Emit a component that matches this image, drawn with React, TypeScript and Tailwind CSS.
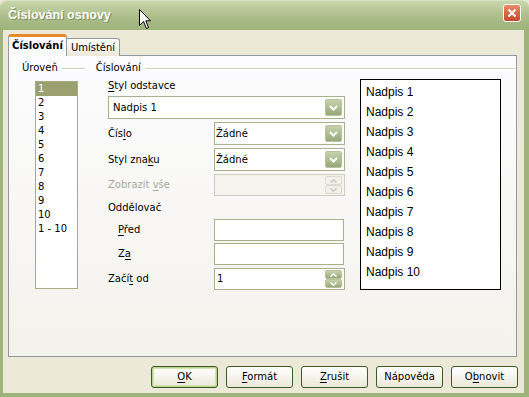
import React from 'react';

const levels = ['1', '2', '3', '4', '5', '6', '7', '8', '9', '10', '1 - 10'];
const headings = Array.from({ length: 10 }, (_, i) => `Nadpis ${i + 1}`);
const buttons = [
  { pre: '', key: 'O', post: 'K', def: true },
  { pre: '', key: 'F', post: 'ormát' },
  { pre: '', key: 'Z', post: 'rušit' },
  { pre: 'Nápověda', key: '', post: '' },
  { pre: 'O', key: 'b', post: 'novit' },
];

function Chevron() {
  return (
    <svg width="9" height="6" viewBox="0 0 9 6">
      <path d="M1 1 L4.5 4.5 L8 1" fill="none" stroke="#fff" strokeWidth="2" />
    </svg>
  );
}

function ComboArrow() {
  return (
    <div className="w-[17px] h-[17px] rounded-[2px] border border-[#b7c39c] bg-gradient-to-b from-[#c7d1ac] to-[#98a878] flex items-center justify-center">
      <Chevron />
    </div>
  );
}

function Combo({ value, wide }: { value: string; wide?: boolean }) {
  return (
    <div
      className={`h-[23px] border border-[#a9b08f] bg-white flex items-center p-[2px] ${
        wide ? 'w-[237px] pl-[4px]' : 'w-[131px] pl-[1px]'
      }`}
    >
      <span className="flex-1">{value}</span>
      <ComboArrow />
    </div>
  );
}

function Spin({ value, disabled }: { value?: string; disabled?: boolean }) {
  const btn = disabled
    ? 'bg-[#f1f0ea] border-[#dddcd3]'
    : 'bg-gradient-to-b from-[#c7d1ac] to-[#98a878] border-[#b7c39c]';
  const stroke = disabled ? '#c9c8bd' : '#fff';
  return (
    <div
      className={`w-[131px] h-[22px] border flex items-center pl-[2px] pr-[2px] ${
        disabled ? 'border-[#cfcdbf] bg-[#f4f3ee]' : 'border-[#a9b08f] bg-white'
      }`}
    >
      <span className="flex-1">{value}</span>
      <div className="flex flex-col gap-0">
        <div className={`w-[17px] h-[9px] border rounded-[2px] flex items-center justify-center ${btn}`}>
          <svg width="7" height="4" viewBox="0 0 7 4">
            <path d="M0.5 3.5 L3.5 0.8 L6.5 3.5" fill="none" stroke={stroke} strokeWidth="1.5" />
          </svg>
        </div>
        <div className={`w-[17px] h-[9px] border rounded-[2px] flex items-center justify-center ${btn}`}>
          <svg width="7" height="4" viewBox="0 0 7 4">
            <path d="M0.5 0.5 L3.5 3.2 L6.5 0.5" fill="none" stroke={stroke} strokeWidth="1.5" />
          </svg>
        </div>
      </div>
    </div>
  );
}

function TextBox() {
  return <div className="w-[130px] h-[22px] border border-[#a9b08f] bg-white" />;
}

function Label({ pre, k, post, indent, disabled }: { pre: string; k: string; post: string; indent?: boolean; disabled?: boolean }) {
  return (
    <span className={`${indent ? 'pl-[10px] w-[106px]' : 'w-[106px]'} ${disabled ? 'text-[#aca899]' : ''}`}>
      {pre}
      <span className="underline underline-offset-[2px]">{k}</span>
      {post}
    </span>
  );
}

export default function App() {
  return (
    <div className="w-[529px] h-[397px] relative flex flex-col bg-[#ece9d8] overflow-hidden font-['DejaVu_Sans',Tahoma,sans-serif] text-[10px] text-black leading-none">
      {/* Title bar */}
      <div className="h-[30px] shrink-0 rounded-t-[7px] border-t border-[#d8e3c4] bg-gradient-to-b from-[#c9d7ac] via-[#aebf8c] to-[#9db279] flex items-center pl-[8px] pr-[8px]">
        <span className="flex-1 text-white font-bold text-[12.5px] font-['Liberation_Sans',Arial,sans-serif] [text-shadow:1px_1px_0_#7d8f5e]">
          Číslování osnovy
        </span>
        <div className="w-[18px] h-[18px] -mt-[5px] rounded-[3px] border border-white bg-gradient-to-b from-[#e88b66] to-[#c4482a] flex items-center justify-center">
          <svg width="10" height="10" viewBox="0 0 10 10">
            <path d="M1.5 1.5 L8.5 8.5 M8.5 1.5 L1.5 8.5" stroke="#fff" strokeWidth="2" />
          </svg>
        </div>
      </div>

      {/* Window body */}
      <div className="flex-1 flex flex-col border-l-[3px] border-r-[5px] border-b-[4px] border-[#9eb47c] pl-[5px] pr-[5px]">
        {/* Tabs */}
        <div className="h-[26px] flex items-end -mb-[1px] relative z-10">
          <div className="w-[59px] h-[22px] bg-[#fcfcfe] border-x border-[#919b9c] border-t-[3px] border-t-[#e68b2c] rounded-t-[3px] flex items-center justify-center font-bold pb-[1px]">
            Číslování
          </div>
          <div className="w-[53px] h-[18px] bg-gradient-to-b from-[#fefefe] to-[#ece9d8] border-t border-r border-[#919b9c] rounded-tr-[3px] flex items-center justify-center">
            Umístění
          </div>
        </div>

        {/* Tab panel */}
        <div className="h-[302px] mr-[2px] border border-[#919b9c] bg-gradient-to-b from-[#fcfcfe] to-[#f3f2ec] flex flex-col">
          <div className="h-[12px] mt-[6px] flex items-center">
            <span className="ml-[13px]">Úroveň</span>
            <div className="ml-[4px] w-[23px] h-px bg-[#d0d0bf]" />
            <span className="ml-[11px]">Číslování</span>
            <div className="ml-[4px] flex-1 mr-[1px] h-px bg-[#d0d0bf]" />
          </div>

          <div className="flex items-start mt-[5px]">
            {/* Level list */}
            <div className="ml-[26px] mt-[2px] w-[43px] h-[208px] border border-[#a4ae86] bg-white">
              {levels.map((l, i) => (
                <div
                  key={l}
                  className={`h-[14px] pl-[2px] flex items-center ${i === 0 ? 'bg-[#9aa06f] text-white' : ''}`}
                >
                  {l}
                </div>
              ))}
            </div>

            {/* Form */}
            <div className="ml-[30px] w-[237px] flex flex-col">
              <div className="h-[14px] flex items-center">
                <Label pre="" k="S" post="tyl odstavce" />
              </div>
              <div className="mt-[3px]">
                <Combo value="Nadpis 1" wide />
              </div>
              <div className="mt-[3px] flex items-center">
                <Label pre="Čís" k="l" post="o" />
                <Combo value="Žádné" />
              </div>
              <div className="mt-[3px] flex items-center">
                <Label pre="Styl zna" k="k" post="u" />
                <Combo value="Žádné" />
              </div>
              <div className="mt-[3px] flex items-center">
                <Label pre="Zobrazit " k="v" post="še" disabled />
                <Spin disabled />
              </div>
              <div className="mt-[5px] h-[14px] flex items-center">
                <span>Oddělovač</span>
              </div>
              <div className="mt-[4px] flex items-center">
                <Label pre="" k="P" post="řed" indent />
                <TextBox />
              </div>
              <div className="mt-[2px] flex items-center">
                <Label pre="Z" k="a" post="" indent />
                <TextBox />
              </div>
              <div className="mt-[3px] flex items-center">
                <Label pre="Začí" k="t" post=" od" />
                <Spin value="1" />
              </div>
            </div>

            {/* Preview */}
            <div className="ml-[15px] w-[141px] h-[211px] border border-black bg-white pt-[2px] pl-[5px] font-['Liberation_Sans',Arial,sans-serif] text-[12px]">
              {headings.map((h) => (
                <div key={h} className="h-[20px] flex items-center">
                  {h}
                </div>
              ))}
            </div>
          </div>
        </div>

        {/* Buttons */}
        <div className="mt-[9px] flex justify-end gap-[8px] pr-[1px]">
          {buttons.map((b, i) => (
            <div
              key={i}
              className={`w-[67px] h-[22px] rounded-[3px] border border-[#3d5a2a] bg-gradient-to-b from-[#ffffff] to-[#ece9d8] flex items-center justify-center ${
                b.def ? 'shadow-[inset_0_0_0_1px_#b8d28f,inset_0_0_0_2px_#d4e4b4]' : ''
              }`}
            >
              <span>
                {b.pre}
                {b.key && <span className="underline underline-offset-[2px]">{b.key}</span>}
                {b.post}
              </span>
            </div>
          ))}
        </div>
      </div>

      {/* Mouse cursor */}
      <svg className="absolute left-[139px] top-[9px]" width="13" height="21" viewBox="0 0 13 21">
        <path d="M0.5 0.5 L0.5 16.5 L4.5 12.5 L7.5 19.5 L9.5 18.5 L6.8 11.8 L11.5 11.8 Z" fill="#fff" stroke="#000" strokeWidth="1" />
      </svg>
    </div>
  );
}
